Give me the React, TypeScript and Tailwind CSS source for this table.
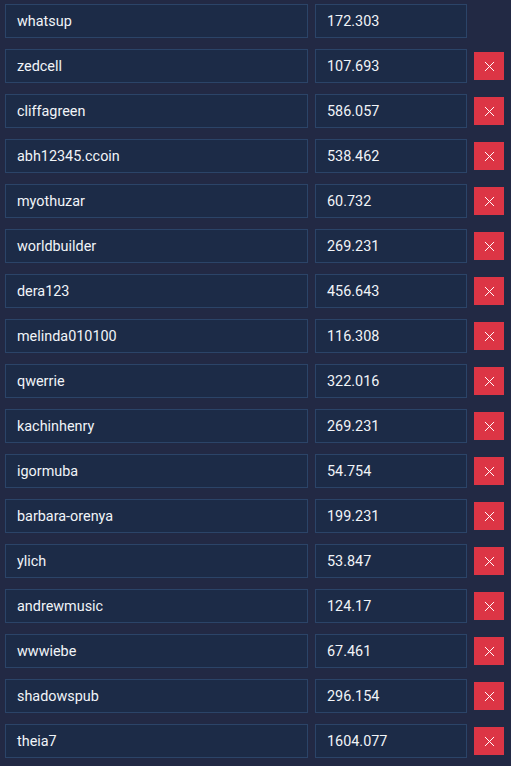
import { X } from 'lucide-react';

const rows: [string, string][] = [
  ['whatsup', '172.303'],
  ['zedcell', '107.693'],
  ['cliffagreen', '586.057'],
  ['abh12345.ccoin', '538.462'],
  ['myothuzar', '60.732'],
  ['worldbuilder', '269.231'],
  ['dera123', '456.643'],
  ['melinda010100', '116.308'],
  ['qwerrie', '322.016'],
  ['kachinhenry', '269.231'],
  ['igormuba', '54.754'],
  ['barbara-orenya', '199.231'],
  ['ylich', '53.847'],
  ['andrewmusic', '124.17'],
  ['wwwiebe', '67.461'],
  ['shadowspub', '296.154'],
  ['theia7', '1604.077'],
];

function Field({ value, className }: { value: string; className: string }) {
  return (
    <div
      className={`h-[34px] flex items-center px-[11px] pt-[1px] bg-[#1c2b47] border border-[#2b4468] text-[#f1f4f8] text-[14.4px] ${className}`}
    >
      {value}
    </div>
  );
}

export default function App() {
  return (
    <div
      className="min-h-[766px] w-[511px] bg-[#222944] pt-[4px] pl-[5px] pr-[7px] flex flex-col gap-[11px]"
      style={{ fontFamily: 'Roboto, "Liberation Sans", sans-serif' }}
    >
      {rows.map(([name, amount], i) => (
        <div key={name} className="flex items-center">
          <Field value={name} className="w-[303px]" />
          <Field value={amount} className="w-[152px] ml-[7px]" />
          {i > 0 && (
            <button className="ml-[7px] w-[30px] h-[28px] bg-[#dc3545] flex items-center justify-center text-white">
              <X size={17} strokeWidth={1.4} />
            </button>
          )}
        </div>
      ))}
    </div>
  );
}
